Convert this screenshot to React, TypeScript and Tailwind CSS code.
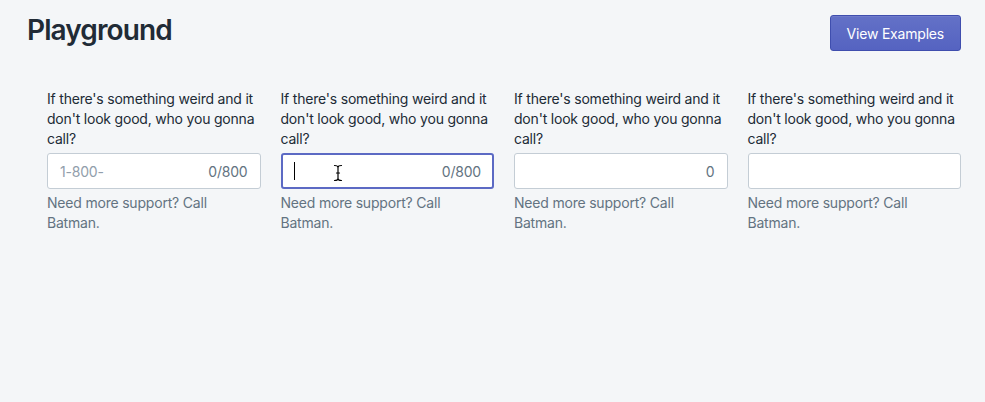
const FONT = "font-['Inter','Noto_Sans',sans-serif]";

type FieldProps = {
    placeholder?: string;
    counter?: string;
    focused?: boolean;
};

function IBeam() {
    return (
        <svg className="absolute left-[50px] top-[9px]" width="10" height="18" viewBox="0 0 10 18">
            <path d="M1.5 1.5 Q5 1.5 5 3.5 Q5 1.5 8.5 1.5 M5 3.5 V14.5 M1.5 16.5 Q5 16.5 5 14.5 Q5 16.5 8.5 16.5 M3 9 H7" fill="none" stroke="#fff" strokeWidth="3" strokeLinecap="round" />
            <path d="M1.5 1.5 Q5 1.5 5 3.5 Q5 1.5 8.5 1.5 M5 3.5 V14.5 M1.5 16.5 Q5 16.5 5 14.5 Q5 16.5 8.5 16.5 M3.5 9 H6.5" fill="none" stroke="#000" strokeWidth="1.2" strokeLinecap="round" />
        </svg>
    );
}

function Field({ placeholder, counter, focused }: FieldProps) {
    return (
        <div className="flex flex-col tracking-[-0.2px]">
            <label className="text-[14px] leading-5 text-[#212b36]">
                If there's something weird and it don't look good, who you gonna call?
            </label>
            <div
                className={`relative mt-1 flex h-9 items-center rounded-[3px] bg-white px-3 ${
                    focused ? "border-2 border-[#5c6ac4] pl-[11px] pr-[11px]" : "border border-[#c4cdd5]"
                }`}
            >
                <span className="flex-1 text-[14px] text-[#919eab]">{placeholder}</span>
                {focused ? <span className="absolute left-[11px] top-[7px] h-[18px] w-[1.5px] bg-black" /> : null}
                {focused ? <IBeam /> : null}
                {counter ? <span className="text-[14px] text-[#637381]">{counter}</span> : null}
            </div>
            <p className="mt-1 text-[14px] leading-5 text-[#637381]">Need more support? Call Batman.</p>
        </div>
    );
}

export default function App() {
    return (
        <main className={`min-h-screen bg-[#f4f6f8] ${FONT}`}>
            <header className="flex items-start justify-between pl-[27px] pr-6 pt-[15px]">
                <h1 className="-mt-[1px] text-[28px] font-semibold leading-8 tracking-[-0.9px] text-[#212b36]">Playground</h1>
                <button className="h-9 rounded-[3px] border border-[#3f4eae] bg-gradient-to-b from-[#6371c7] to-[#5563c1] px-4 text-[14px] tracking-[-0.2px] text-white shadow-[inset_0_1px_0_0_#6f7bcb]">
                    View Examples
                </button>
            </header>

            <section className="mt-[38px] grid grid-cols-4 gap-5 pl-[47px] pr-6">
                <Field placeholder="1-800-" counter="0/800" />
                <Field counter="0/800" focused />
                <Field counter="0" />
                <Field />
            </section>
        </main>
    );
}
